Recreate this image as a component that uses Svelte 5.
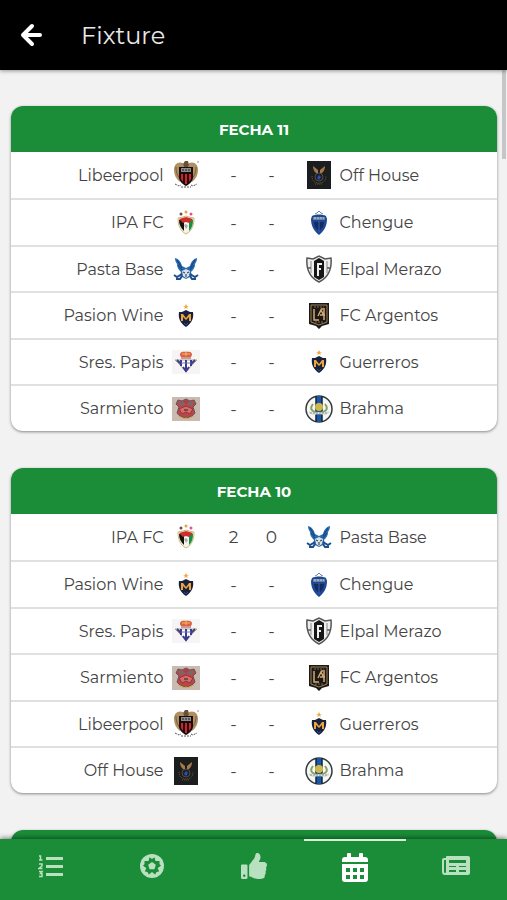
<script lang="ts">
  type Match = { home: string; away: string; score?: [number, number] }
  type Round = { title: string; matches: Match[] }

  const crests: Record<string, string> = {
    'Libeerpool': 'eagle',
    'IPA FC': 'tricolor',
    'Pasta Base': 'wings',
    'Pasion Wine': 'star',
    'Guerreros': 'star',
    'Sres. Papis': 'crown',
    'Sarmiento': 'red',
    'Off House': 'dark',
    'Chengue': 'blue',
    'Elpal Merazo': 'stripes',
    'FC Argentos': 'gold',
    'Brahma': 'round'
  }

  const rounds: Round[] = [
    {
      title: 'FECHA 11',
      matches: [
        { home: 'Libeerpool', away: 'Off House' },
        { home: 'IPA FC', away: 'Chengue' },
        { home: 'Pasta Base', away: 'Elpal Merazo' },
        { home: 'Pasion Wine', away: 'FC Argentos' },
        { home: 'Sres. Papis', away: 'Guerreros' },
        { home: 'Sarmiento', away: 'Brahma' }
      ]
    },
    {
      title: 'FECHA 10',
      matches: [
        { home: 'IPA FC', away: 'Pasta Base', score: [2, 0] },
        { home: 'Pasion Wine', away: 'Chengue' },
        { home: 'Sres. Papis', away: 'Elpal Merazo' },
        { home: 'Sarmiento', away: 'FC Argentos' },
        { home: 'Libeerpool', away: 'Guerreros' },
        { home: 'Off House', away: 'Brahma' }
      ]
    }
  ]

  const tabs = [
    { id: 'table', label: 'Posiciones' },
    { id: 'ball', label: 'Goleadores' },
    { id: 'thumb', label: 'Fair play' },
    { id: 'calendar', label: 'Fixture' },
    { id: 'news', label: 'Noticias' }
  ]

  let active = $state('calendar')
</script>

{#snippet crest(team: string)}
  {@const kind = crests[team]}
  <svg class="crest" viewBox="0 0 28 28" aria-hidden="true">
    {#if kind === 'eagle'}
      <path d="M11 2C6 0 2 3 2 9c0 5 2 9 6 12l5-9zM17 2c5-2 9 1 9 7 0 5-2 9-6 12l-5-9z" fill="#b08f63" />
      <path d="M4 6c0 6 2 10 5 12M24 6c0 6-2 10-5 12" stroke="#7b5c3b" fill="none" />
      <path d="M11 3l2-3 3 0 1 4-1 3h-4z" fill="#6b5038" />
      <path d="M7 6h14v10c0 4-3 7-7 9-4-2-7-5-7-9z" fill="#160d0d" />
      <path d="M9 13h2v8l-2-3zM13 13h2v10h-2zM17 13h2v5l-2 3z" fill="#d6202b" />
      <path d="M9 7h10v4H9z" fill="#8d8d8d" />
      <path d="M10 9h2M13 9h2M16 9h2" stroke="#222" />
      <path d="M3 23l4 2 2-1M19 24l2 1 4-2M9 26h10" stroke="#555" fill="none" stroke-dasharray="2 1" />
      <path d="M25 1h2" stroke="#999" />
    {:else if kind === 'tricolor'}
      <circle cx="9" cy="5" r="1.500" fill="#6c4b4f" />
      <circle cx="14" cy="3" r="1.500" fill="#eaa142" />
      <circle cx="19" cy="5" r="1.500" fill="#dc54a0" />
      <path d="M6 9l5-1 3-1 3 1 5 1c0 7-2 13-8 16-6-3-8-9-8-16z" fill="#f6f3ea" stroke="#c6a64e" stroke-width="0.800" />
      <path d="M7 11h5v11c-3-3-5-6-5-11z" fill="#111" />
      <path d="M17 11h4c0 5-1 8-4 11z" fill="#149147" />
      <path d="M7 10l7-2 7 2-4 4-3-1-3 1z" fill="#cf2c2c" />
      <path d="M12 16l2-1 2 2-2 3z" fill="#aaa" />
    {:else if kind === 'wings'}
      <path d="M3 3c0 3 1 4 2 6 0 4 2 6 4 8l-1 4 6 3 6-3-1-4c2-2 4-4 4-8 1-2 2-3 2-6-4 1-6 4-7 8l-4 2-4-2C9 7 7 4 3 3z" fill="#276bb0" />
      <path d="M5 5l5 8M6 10l4 5M23 5l-5 8M22 10l-4 5" stroke="#163f78" />
      <path d="M10 16l4-2 4 2-1 5-3 2-3-2z" fill="#d9dfe6" />
      <path d="M11 17l2 1M17 17l-2 1M14 19v3" stroke="#263143" />
      <path d="M2 20l3 2 5-3M26 20l-3 2-5-3M4 24l4 0 2-3M24 24h-4l-2-3" stroke="#1d4f8d" stroke-width="2" fill="none" />
    {:else if kind === 'star'}
      <path d="M14 2l1 2h2l-2 1 1 2-2-1-2 1 1-2-2-1h2z" fill="#eea83c" />
      <path d="M7 10h3l4-2 4 2h3c1 6-1 11-7 15-6-4-8-9-7-15z" fill="#18213d" />
      <path d="M9 19v-7h2l3 4 3-4h2v7h-2v-4l-3 3-3-3v4z" fill="#eda43b" />
      <path d="M12 21l2 2 2-2" stroke="#324b85" fill="none" />
    {:else if kind === 'crown'}
      <rect y="2" width="28" height="24" fill="#f6f4f4" />
      <path d="M9 9c-3-4 1-6 5-5 4-1 8 1 5 5z" fill="#dc6048" />
      <path d="M10 6h8M14 3v5" stroke="#eebd54" />
      <path d="M9 10h10" stroke="#a33d3d" />
      <path d="M3 12h22l-5 5-6 7-6-7z" fill="#fff" stroke="#b5a878" />
      <path d="M5 12l4 4M9 12v6M19 12v6M23 12l-4 4M14 12v11M11 19l3 4 3-4" stroke="#373b93" stroke-width="2" fill="none" />
      <path d="M9 15h10" stroke="#6f73b5" />
    {:else if kind === 'red'}
      <rect y="2" width="28" height="24" fill="#c9bbb1" />
      <path d="M6 5l4 1 4-2 4 2 4-1 2 4-3 3 2 6c-2 3-5 4-9 5-4-1-7-2-9-5l2-6-3-3z" fill="#bd4547" stroke="#6b5154" />
      <path d="M6 6l4 1 4-2 4 2 4-1-2 5-6-2-6 2z" fill="#79686a" />
      <path d="M7 14l7-3 7 3-3 5-4-2-4 2z" fill="#de6964" stroke="#853b42" />
      <path d="M11 7l3-2 3 2-3 2z" fill="#b93842" />
      <path d="M12 14h4v2h-4z" fill="#684c54" />
      <path d="M6 21l6 3 2-1 2 1 6-3" stroke="#d6ac46" fill="none" />
    {:else if kind === 'dark'}
      <rect x="2" width="24" height="28" fill="#1c1d1e" />
      <path d="M8 5l5 4v4c-3-1-5-4-5-8zM20 5l-5 4v4c3-1 5-4 5-8z" fill="#a47b48" />
      <circle cx="14" cy="16" r="4" fill="#14213d" stroke="#5c4b31" />
      <path d="M12 17l2-3 2 2-2 3z" fill="#304fa8" />
      <path d="M7 15c0 5 3 7 7 7s7-2 7-7M10 23h8" stroke="#675b3a" stroke-dasharray="1 1" fill="none" />
    {:else if kind === 'blue'}
      <path d="M10 5l2-1 2-2 2 2 2 1" stroke="#5f86b5" fill="none" />
      <path d="M7 7c4-2 10-2 14 0l1 3c0 7-3 12-8 16-5-4-8-9-8-16z" fill="#1d4794" />
      <path d="M8 8h12v3H8z" fill="#6b8497" />
      <path d="M9 9h10" stroke="#ccd1d3" stroke-dasharray="2 1" />
      <path d="M9 13h10l-1 5-4 4-4-4z" fill="#142b61" />
      <path d="M14 12v11" stroke="#3765b1" />
    {:else if kind === 'stripes'}
      <path d="M2 3l6 1 6-3 6 3 6-1c1 11-2 19-12 24C4 22 1 14 2 3z" fill="#eee" stroke="#555" stroke-width="1.500" />
      <path d="M6 6v12M22 6v12" stroke="#888" />
      <path d="M9 6l5-3 5 3v16l-5 3-5-3z" fill="#161616" />
      <path d="M12 8h5v2h-3v3h2v2h-2v6h-2z" fill="#eee" />
      <path d="M3 13h3M22 13h3" stroke="#777" stroke-width="2" />
    {:else if kind === 'gold'}
      <path d="M4 1h20v21l-7 2-3 3-3-3-7-2z" fill="#1b1917" />
      <path d="M6 3h16v17l-8 3-8-3z" fill="none" stroke="#9e8052" />
      <path d="M9 7v11h5M13 14l3-6 3 6M19 8v10M15 13h5M16 7h4" stroke="#d1aa75" stroke-width="1.500" fill="none" />
      <path d="M9 5h10M10 20h8" stroke="#806849" stroke-dasharray="2 1" />
    {:else if kind === 'round'}
      <circle cx="14" cy="14" r="13" fill="#f6f7f5" stroke="#333b3e" stroke-width="1.500" />
      <path d="M11 1h6v26h-6z" fill="#1b58a4" />
      <path d="M11 1v26M17 1v26" stroke="#142237" stroke-width="1.500" />
      <path d="M8 9c-4 5-1 8 6 9 7-1 10-4 6-9" fill="none" stroke="#84a263" stroke-width="2" />
      <circle cx="14" cy="12" r="4" fill="#cfb84b" />
      <path d="M4 17l4 2 6-1 6 1 4-2" stroke="#d9ddd9" stroke-width="2" fill="none" />
      <path d="M5 18h18" stroke="#8b9297" stroke-dasharray="2 1" />
    {/if}
  </svg>
{/snippet}

{#snippet icon(id: string)}
  {#if id === 'table'}
    <svg width="26" height="26" viewBox="0 0 26 26" fill="currentColor" aria-hidden="true">
      <path d="M8 4h17v3H8zM8 12h17v3H8zM8 20h17v3H8z" />
      <path d="M1 3h1.500v4M1 7h3.500M1 11h3v2l-3 2.500h3.500M1 18.500h3L2.500 20.500H4v3H1" fill="none" stroke="currentColor" stroke-width="1.500" />
    </svg>
  {:else if id === 'ball'}
    <svg width="26" height="26" viewBox="0 0 26 26" aria-hidden="true">
      <circle cx="13" cy="13" r="12" fill="currentColor" />
      <path class="cut" d="M10.500 4.300L13 6l2.500-1.700 1 3.800L20.500 8v3l1.500 1.700-3.300 2.200 1.400 3.600-2.500.5-1.500 2.500L13 19l-3.100 2.500L8.400 19l-2.500-.5 1.400-3.600L4 12.700 5.500 11V8l4 .1z" />
      <path fill="currentColor" d="M13 9l3.800 2.800-1.400 4.500h-4.800l-1.400-4.500z" />
    </svg>
  {:else if id === 'thumb'}
    <svg width="26" height="26" viewBox="0 0 512 512" fill="currentColor" aria-hidden="true">
      <path d="M104 224H24c-13.300 0-24 10.700-24 24v240c0 13.300 10.700 24 24 24h80c13.300 0 24-10.700 24-24V248c0-13.300-10.700-24-24-24zM64 472c-13.300 0-24-10.700-24-24s10.700-24 24-24 24 10.700 24 24-10.700 24-24 24zM384 81.500c0 42.400-26 66.200-33.300 94.500h101.700c33.400 0 59.400 27.700 59.600 58.100.1 17.900-7.500 37.200-19.400 49.200l-.1.100c9.800 23.300 8.200 56-9.300 79.500 8.700 25.900-.1 57.700-16.400 74.800 4.300 17.600 2.200 32.600-6.100 44.600C440.200 511.600 389.600 512 346.800 512h-2.800c-48.300 0-87.800-17.600-119.600-31.700-16-7.100-36.800-15.900-52.700-16.200-6.500-.1-11.800-5.500-11.800-12V238.300c0-3.200 1.300-6.300 3.600-8.500 39.600-39.100 56.600-80.600 89.100-113.100 14.800-14.800 20.200-37.200 25.400-58.900C282.500 39.300 291.800 0 312 0c24 0 72 8 72 81.500z" />
    </svg>
  {:else if id === 'calendar'}
    <svg width="26" height="34" viewBox="0 -4 26 34" aria-hidden="true">
      <path fill="currentColor" fill-rule="evenodd" d="M0 11h26v15q0 3-3 3H3q-3 0-3-3zM4 15v4h4v-4zM11 15v4h4v-4zM18 15v4h4v-4zM4 22v4h4v-4zM11 22v4h4v-4zM18 22v4h4v-4z" />
      <path fill="currentColor" d="M0 9V7q0-3 3-3h2V1q0-1 1-1h2q1 0 1 1v3h8V1q0-1 1-1h2q1 0 1 1v3h2q3 0 3 3v2z" />
    </svg>
  {:else}
    <svg width="28" height="20" viewBox="0 0 28 20" aria-hidden="true">
      <path fill="currentColor" fill-rule="evenodd" d="M5 0h21q2 0 2 2v15q0 2-2 2H3q-3 0-3-3V4q0-2 2-2h2V1q0-1 1-1zM2 4v12q0 1 1 1t1-1V4zM7 4v3h17V4zM7 10v1h7v-1zM17 10v1h7v-1zM7 14v2h7v-2zM17 14v2h7v-2z" />
    </svg>
  {/if}
{/snippet}

<div class="app">
  <header>
    <button class="back" aria-label="Volver">
      <svg width="24" height="24" viewBox="0 0 24 24" aria-hidden="true">
        <path d="M12 3l-9 9 9 9M3 12h17" fill="none" stroke="#fff" stroke-width="4" stroke-linecap="round" stroke-linejoin="round" />
      </svg>
    </button>
    <h1>Fixture</h1>
  </header>

  <main>
    {#each rounds as round}
      <section class="card">
        <h2>{round.title}</h2>
        <ul>
          {#each round.matches as match}
            <li>
              <span class="home">{match.home}</span>
              {@render crest(match.home)}
              <span class="score">
                <span>{match.score ? match.score[0] : '-'}</span>
                <span>{match.score ? match.score[1] : '-'}</span>
              </span>
              {@render crest(match.away)}
              <span>{match.away}</span>
            </li>
          {/each}
        </ul>
      </section>
    {/each}
    <section class="card"><h2></h2></section>
    <div class="thumb"></div>
  </main>

  <nav>
    {#each tabs as tab}
      <button class:active={active === tab.id} aria-label={tab.label} onclick={() => (active = tab.id)}>
        {@render icon(tab.id)}
      </button>
    {/each}
  </nav>
</div>

<style>
  :global(body) {
    background: #f2f2f2;
  }

  .app {
    display: flex;
    flex-direction: column;
    height: 100vh;
    font-family: Montserrat, Inter, 'Open Sans', sans-serif;
    color: #444;
  }

  header {
    display: flex;
    align-items: center;
    flex-shrink: 0;
    gap: 37px;
    height: 70px;
    margin-bottom: -1px;
    padding: 0 20px;
    box-sizing: border-box;
    background: #000;
    box-shadow: 0 1px 4px rgba(0, 0, 0, 0.4);
    z-index: 1;
  }

  button {
    display: flex;
    align-items: center;
    justify-content: center;
    padding: 0;
    border: 0;
    background: none;
    cursor: pointer;
  }

  h1 {
    margin: 0;
    color: #e8e8e8;
    font-size: 24px;
    font-weight: 400;
  }

  main {
    position: relative;
    display: flex;
    flex: 1;
    flex-direction: column;
    gap: 37px;
    min-height: 0;
    padding: 37px 10px 0 11px;
    overflow: hidden;
  }

  .card {
    flex-shrink: 0;
    border-radius: 12px;
    background: #fff;
    box-shadow: 0 1px 3px rgba(0, 0, 0, 0.45);
  }

  h2 {
    height: 46px;
    margin: 0;
    border-radius: 12px 12px 0 0;
    background: #1b8d39;
    color: #fff;
    font-size: 15px;
    font-weight: 700;
    line-height: 48px;
    text-align: center;
  }

  ul {
    margin: 0;
    padding: 0;
    list-style: none;
  }

  li {
    display: grid;
    grid-template-columns: minmax(0, 1fr) 44px 90px 42px minmax(0, 1fr);
    align-items: center;
    box-sizing: border-box;
    height: 46px;
    padding-right: 5px;
    font-size: 16px;
    white-space: nowrap;
  }

  li:nth-child(even) {
    height: 47px;
  }

  li + li {
    border-top: 2px solid #e0e0e0;
  }

  .home {
    text-align: right;
  }

  .crest {
    width: 28px;
    height: 28px;
    justify-self: center;
  }

  .score {
    display: grid;
    grid-template-columns: 38px 38px;
    justify-content: center;
    font-size: 17px;
    text-align: center;
  }

  .thumb {
    position: absolute;
    top: 0;
    right: 1px;
    width: 4px;
    height: 90px;
    background: #c6c6c6;
  }

  nav {
    display: flex;
    flex-shrink: 0;
    height: 61px;
    background: #1b8d39;
    box-shadow: 0 -1px 5px rgba(0, 0, 0, 0.5);
    z-index: 1;
  }

  nav button {
    flex: 1;
    padding-bottom: 9px;
    border-top: 2px solid transparent;
    color: #b9e0bf;
  }

  nav .active {
    border-color: #d5f0d9;
    color: #fff;
  }

  .cut {
    fill: #1b8d39;
  }
</style>
